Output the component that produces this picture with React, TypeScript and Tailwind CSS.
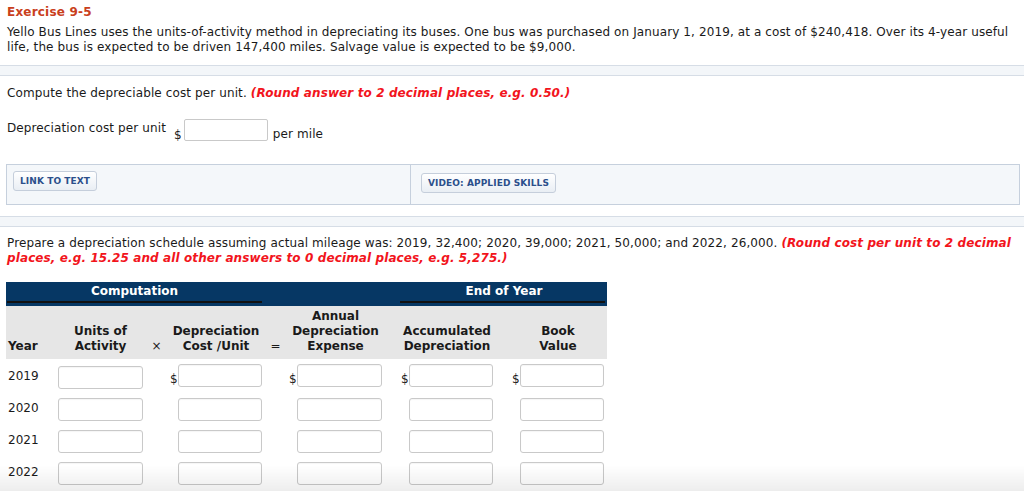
import React from 'react';

const font = "font-['DejaVu_Sans',Verdana,sans-serif]";

const Band = ({ className = '' }: { className?: string }) => (
  <div className={`h-[11px] border-y border-[#d6dde6] bg-[#f3f6f9] ${className}`} />
);

const Box = ({ className = '' }: { className?: string }) => (
  <input
    type="text"
    className={`h-[23px] w-full rounded-[3px] border border-[#c9c9c9] bg-white shadow-[inset_0_1px_1px_rgba(0,0,0,0.04)] outline-none ${className}`}
  />
);

const PanelButton = ({ label }: { label: string }) => (
  <button className="h-[20px] rounded-[3px] border border-[#c5cedb] bg-gradient-to-b from-white to-[#e9eef4] px-[6px] text-[9px] font-bold leading-none tracking-[0.01em] text-[#2b4f8b]">
    {label}
  </button>
);

const years = ['2019', '2020', '2021', '2022'];

// grid columns line up the header cells, the operators and the inputs
const cols = 'grid grid-cols-[52px_85px_27px_92px_27px_93px_19px_92px_19px_92px_3px]';

export default function App() {
  return (
    <div className={`min-h-screen bg-white text-[12px] leading-[15px] text-[#1a1a1a] ${font}`}>
      {/* Exercise header */}
      <div className="px-[7px] pt-[5px]">
        <h2 className="text-[12px] font-bold leading-[15px] tracking-[0.2px] text-[#c9401c]">Exercise 9-5</h2>
        <p className="mt-[5px] pr-[4px] tracking-[0.11px]">
          Yello Bus Lines uses the units-of-activity method in depreciating its buses. One bus was purchased on January 1, 2019, at a cost of $240,418. Over its 4-year useful life, the bus is expected to be driven 147,400 miles. Salvage value is expected to be $9,000.
        </p>
      </div>

      <Band className="mt-[10px]" />

      {/* Part 1 */}
      <div className="px-[7px] tracking-[0.11px]">
        <p className="mt-[10px]">
          Compute the depreciable cost per unit.{' '}
          <span className="font-bold italic text-[#f2141c]">(Round answer to 2 decimal places, e.g. 0.50.)</span>
        </p>
        <div className="mt-[18px] flex items-start">
          <span className="pt-[2px]">Depreciation cost per unit</span>
          <span className="ml-[8px] pt-[9px]">$</span>
          <input
            type="text"
            className="ml-[2px] h-[22px] w-[84px] rounded-[2px] border border-[#c9c9c9] bg-white outline-none"
          />
          <span className="ml-[5px] pt-[8px]">per mile</span>
        </div>
      </div>

      <div className="ml-[6px] mt-[21px] grid h-[41px] w-[1014px] grid-cols-[404px_1fr] border border-[#c6d0dd] bg-[#f4f7fa]">
        <div className="border-r border-[#c6d0dd] pl-[6px] pt-[6px]">
          <PanelButton label="LINK TO TEXT" />
        </div>
        <div className="pl-[10px] pt-[8px]">
          <PanelButton label="VIDEO: APPLIED SKILLS" />
        </div>
      </div>

      <Band className="mt-[11px]" />

      {/* Part 2 */}
      <div className="px-[7px] tracking-[0.11px]">
        <p className="mt-[9px]">
          Prepare a depreciation schedule assuming actual mileage was: 2019, 32,400; 2020, 39,000; 2021, 50,000; and 2022, 26,000.{' '}
          <span className="font-bold italic text-[#f2141c]">
            (Round cost per unit to 2 decimal places, e.g. 15.25 and all other answers to 0 decimal places, e.g. 5,275.)
          </span>
        </p>
      </div>

      <div className="ml-[6px] mt-[16px] w-[601px]">
        {/* navy group header */}
        <div className={`${cols} h-[24px] bg-[#063764] font-bold text-white`}>
          <div className="col-span-4 flex flex-col items-center pl-[1px]">
            <span className="mt-[2px]">Computation</span>
            <div className="mt-[2px] h-[2px] w-full bg-[#111]" />
          </div>
          <div className="col-span-3" />
          <div className="col-span-4 flex flex-col items-center pr-[2px]">
            <span className="mt-[2px] pl-[2px]">End of Year</span>
            <div className="-ml-[2px] mt-[2px] h-[2px] w-[205px] bg-[#111]" />
          </div>
        </div>

        {/* column headers */}
        <div className={`${cols} h-[53px] items-end bg-[#e6e6e6] pb-[5px] text-center font-bold`}>
          <div className="pl-[2px] text-left">Year</div>
          <div>Units of<br />Activity</div>
          <div className="font-normal">×</div>
          <div>Depreciation<br />Cost /Unit</div>
          <div className="font-normal">=</div>
          <div>Annual<br />Depreciation<br />Expense</div>
          <div />
          <div>Accumulated<br />Depreciation</div>
          <div />
          <div>Book<br />Value</div>
          <div />
        </div>

        {years.map((y, i) => {
          const first = i === 0;
          return (
            <div key={y} className={`${cols} ${first ? 'h-[35px] pt-[5px]' : 'h-[32px] pt-[4px]'} items-start`}>
              <div className={`pl-[2px] ${first ? 'pt-[5px]' : 'pt-[3px]'}`}>{y}</div>
              <div className={first ? 'pt-[2px]' : ''}>
                <Box />
              </div>
              <div />
              {[0, 1, 2, 3].map((k) => (
                <React.Fragment key={k}>
                  <div className="flex items-end">
                    <span className="w-[8px] shrink-0 text-left">{first ? '$' : ''}</span>
                    <Box />
                  </div>
                  <div />
                </React.Fragment>
              ))}
            </div>
          );
        })}
      </div>

      {/* faint page fade at the bottom edge */}
      <div className="pointer-events-none fixed inset-x-0 bottom-0 h-[26px] bg-gradient-to-b from-black/0 to-black/[0.07]" />
    </div>
  );
}
